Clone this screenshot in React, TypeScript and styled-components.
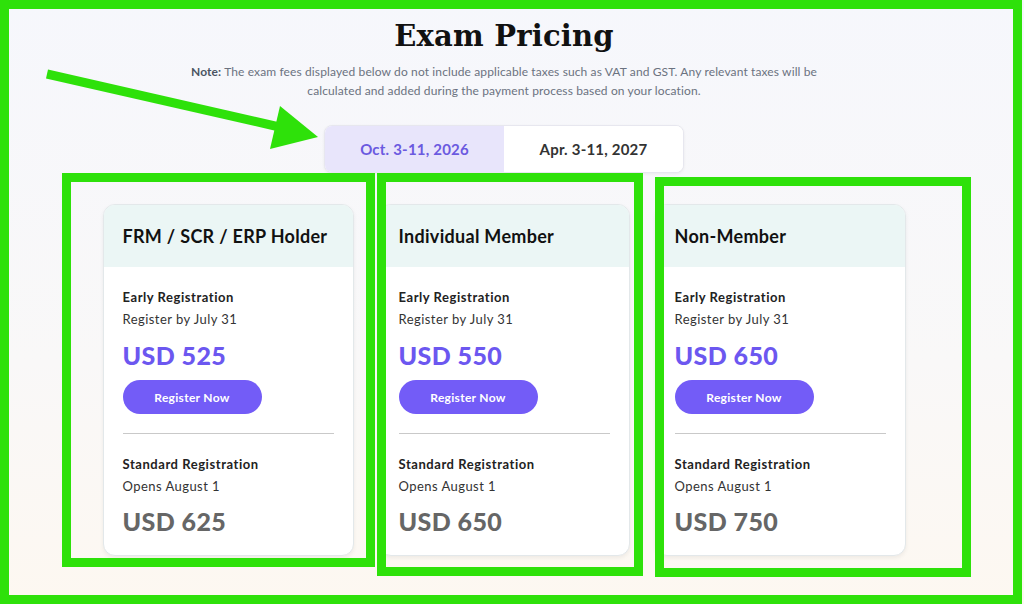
import styled, { createGlobalStyle } from 'styled-components';

const GlobalStyle = createGlobalStyle`
  * { box-sizing: border-box; }
  body {
    margin: 0;
    font-family: 'Lato', 'Open Sans', sans-serif;
  }
`;

const GREEN = '#2ee10a';

const plans = [
  { name: 'FRM / SCR / ERP Holder', early: 'USD 525', standard: 'USD 625' },
  { name: 'Individual Member', early: 'USD 550', standard: 'USD 650' },
  { name: 'Non-Member', early: 'USD 650', standard: 'USD 750' }
];

// annotation rectangles drawn over the screenshot
const marks = [
  { left: 62, top: 173, width: 313, height: 394 },
  { left: 377, top: 173, width: 266, height: 403 },
  { left: 655, top: 177, width: 316, height: 400 }
];

const App = () => {
  return (
    <>
      <GlobalStyle />
      <Page>
        <Title>Exam Pricing</Title>
        <Note>
          <strong>Note:</strong> The exam fees displayed below do not include applicable taxes such as VAT
          and GST. Any relevant taxes will be calculated and added during the payment process based on your
          location.
        </Note>

        <Tabs>
          <Tab $active>Oct. 3-11, 2026</Tab>
          <Tab>Apr. 3-11, 2027</Tab>
        </Tabs>

        <CardRow>
          {plans.map((plan) => (
            <Card key={plan.name}>
              <CardHeader>{plan.name}</CardHeader>
              <CardBody>
                <Label>Early Registration</Label>
                <Sub>Register by July 31</Sub>
                <Price $early>{plan.early}</Price>
                <RegisterButton>Register Now</RegisterButton>
                <Divider />
                <Label>Standard Registration</Label>
                <Sub>Opens August 1</Sub>
                <Price>{plan.standard}</Price>
              </CardBody>
            </Card>
          ))}
        </CardRow>

        <Frame />
        {marks.map((m, i) => (
          <MarkBox key={i} style={{ left: m.left, top: m.top, width: m.width, height: m.height }} />
        ))}
        <Arrow width="330" height="160" viewBox="0 0 330 160">
          <line x1="47" y1="74" x2="288" y2="129" stroke={GREEN} strokeWidth="9" />
          <polygon points="318,137 280,106 270,149" fill={GREEN} />
        </Arrow>
      </Page>
    </>
  );
};

export default App;

const Page = styled.div`
  position: relative;
  width: 1024px;
  height: 604px;
  overflow: hidden;
  padding: 16px 16px 0 0;
  background: linear-gradient(180deg, #f6f7fc 0%, #f9f8f8 60%, #fdf8f1 100%);
  display: flex;
  flex-direction: column;
  align-items: center;
`;

const Title = styled.h1`
  margin: 0;
  font-family: 'DejaVu Serif', 'Liberation Serif', serif;
  font-weight: 700;
  font-size: 29px;
  line-height: 40px;
  color: #111;
  letter-spacing: 0.2px;
`;

const Note = styled.p`
  margin: 6px 0 0;
  max-width: 680px;
  text-align: center;
  font-size: 12px;
  line-height: 19px;
  letter-spacing: 0.12px;
  color: #6b7280;

  strong {
    color: #4b5563;
    font-weight: 700;
  }
`;

const Tabs = styled.div`
  display: flex;
  margin-top: 25px;
  background: #fff;
  border: 1px solid #e7e7ef;
  border-radius: 8px;
  box-shadow: 0 1px 3px rgba(0, 0, 0, 0.06);
  overflow: hidden;
`;

const Tab = styled.div<{ $active?: boolean }>`
  width: 179px;
  height: 46px;
  display: flex;
  align-items: center;
  justify-content: center;
  font-size: 15px;
  font-weight: 700;
  letter-spacing: 0.2px;
  color: ${(p) => (p.$active ? '#6b5ae0' : '#333')};
  background: ${(p) => (p.$active ? '#e8e5fb' : '#fff')};
`;

const CardRow = styled.div`
  display: flex;
  gap: 25px;
  margin-top: 31px;
`;

const Card = styled.div`
  width: 251px;
  background: #fff;
  border: 1px solid #e3e8ea;
  border-radius: 12px;
  box-shadow: 0 2px 4px rgba(0, 0, 0, 0.06);
  overflow: hidden;
`;

const CardHeader = styled.div`
  height: 62px;
  display: flex;
  align-items: center;
  padding: 0 19px;
  background: #ebf6f5;
  font-size: 18px;
  font-weight: 700;
  letter-spacing: 0.3px;
  white-space: nowrap;
  color: #111;
`;

const CardBody = styled.div`
  padding: 19px 19px 19px;
  display: flex;
  flex-direction: column;
  align-items: flex-start;
`;

const Label = styled.div`
  font-size: 13px;
  line-height: 22px;
  font-weight: 700;
  letter-spacing: 0.55px;
  color: #222;
`;

const Sub = styled.div`
  font-size: 13px;
  line-height: 22px;
  letter-spacing: 0.45px;
  color: #333;
`;

const Price = styled.div<{ $early?: boolean }>`
  margin-top: ${(p) => (p.$early ? '10px' : '9px')};
  font-size: 25px;
  line-height: 30px;
  font-weight: 900;
  letter-spacing: 0.4px;
  color: ${(p) => (p.$early ? '#6c57f0' : '#666')};
`;

const RegisterButton = styled.button`
  margin-top: 10px;
  width: 139px;
  height: 34px;
  border: none;
  border-radius: 17px;
  background: #735cf7;
  color: #fff;
  font-family: inherit;
  font-size: 12px;
  font-weight: 700;
  letter-spacing: 0.3px;
  cursor: pointer;
`;

const Divider = styled.hr`
  align-self: stretch;
  margin: 19px 0 19px;
  border: none;
  border-top: 1px solid #c9c9c9;
`;

const Frame = styled.div`
  position: absolute;
  left: 0;
  top: 0;
  width: 1022px;
  height: 604px;
  border: 9px solid ${GREEN};
  pointer-events: none;
`;

const MarkBox = styled.div`
  position: absolute;
  border: 9px solid ${GREEN};
  pointer-events: none;
`;

const Arrow = styled.svg`
  position: absolute;
  left: 0;
  top: 0;
  pointer-events: none;
`;
